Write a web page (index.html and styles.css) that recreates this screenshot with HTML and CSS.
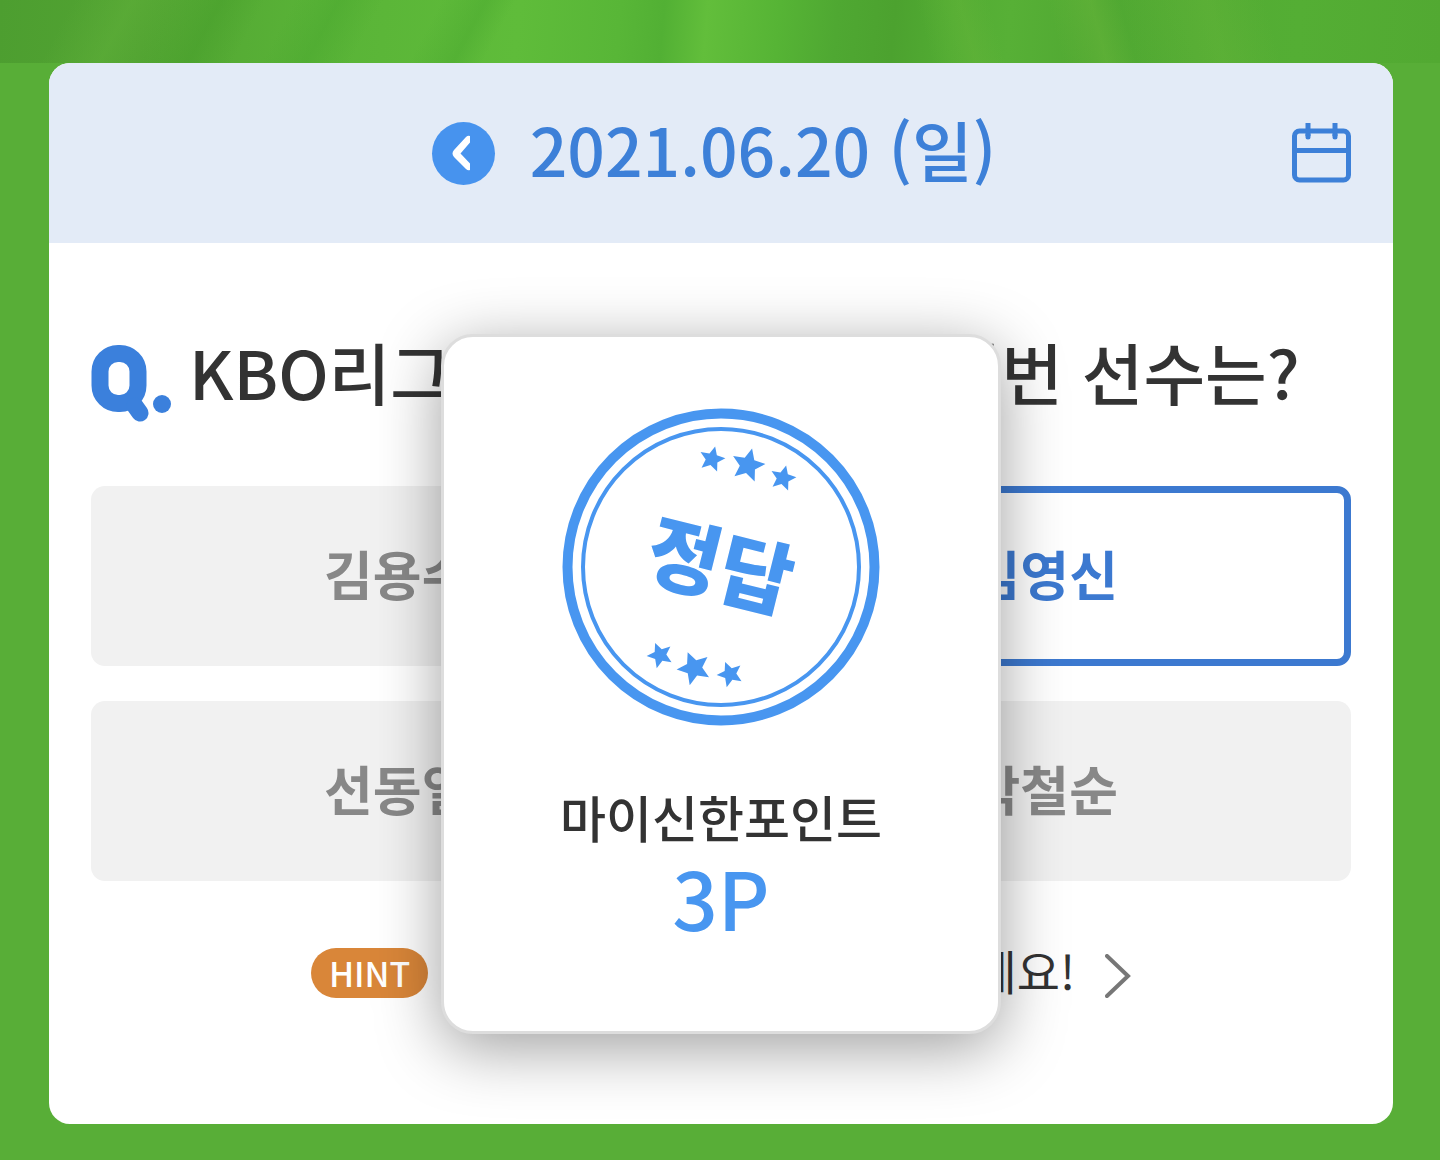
FILE: index.html
```html
<!DOCTYPE html>
<html lang="ko">
<head>
    <meta charset="UTF-8">
    <meta name="viewport" content="width=device-width, initial-scale=1.0">
    <title>야구 퀴즈</title>
    <link rel="stylesheet" href="styles.css">
</head>
<body>

    <main class="quiz-card">
        <header class="date-bar">
            <button class="prev-button" type="button" aria-label="이전 날짜">
                <svg viewBox="0 0 63 63" aria-hidden="true">
                    <path d="M38 14v6.500L28.500 31.500 38 41.500V48q-2 1-4-1L22 35q-3-3.500 0-7L34 15q2-2 4-1z" fill="#fff"/>
                </svg>
            </button>
            <h1 class="date">2021.06.20 (일)</h1>
            <button class="calendar-button" type="button" aria-label="달력">
                <svg viewBox="0 0 60 60" fill="none" stroke="#3d80d8" stroke-width="5" aria-hidden="true">
                    <rect x="3.500" y="8" width="54" height="49" rx="5"/>
                    <path d="M3 27.500h55M17 0v13M44 0v13"/>
                    <path d="M17 12v2M44 12v2" stroke-linecap="round"/>
                </svg>
            </button>
        </header>

        <section class="quiz-body">
            <h2 class="question">
                <svg class="q-mark" viewBox="0 0 82 78" role="img" aria-label="Q.">
                    <rect x="9" y="9.500" width="38" height="50" rx="18" fill="none" stroke="#3b80dc" stroke-width="17"/>
                    <path d="M44 62l5 7" stroke="#3b80dc" stroke-width="17" stroke-linecap="round"/>
                    <circle cx="71" cy="60" r="9" fill="#3b80dc"/>
                </svg>
                <span class="question-text">KBO리그 역대 최초의 영구결번 선수는?</span>
            </h2>

            <div class="options">
                <button class="option" type="button">김용수</button>
                <button class="option selected" type="button">김영신</button>
                <button class="option" type="button">선동열</button>
                <button class="option" type="button">박철순</button>
            </div>

            <a class="hint" href="#">
                <span class="hint-badge">HINT</span>
                <span class="hint-text">지금 바로 힌트를 확인해보세요!</span>
                <svg class="hint-arrow" viewBox="0 0 26 44" aria-hidden="true">
                    <path d="M2 2l21 20L2 42" fill="none" stroke="#777" stroke-width="4" stroke-linecap="round"/>
                </svg>
            </a>

            <!-- Result popup over the quiz -->
            <div class="overlay">
                <div class="popup" role="dialog" aria-label="정답">
                    <svg class="stamp" viewBox="0 0 318 318" fill="#4896f0">
                        <defs>
                            <path id="star" d="M0-13L3.800-4.800 12.800-4 6 2 8 11 0 6.300-8 11-6 2-12.800-4-3.800-4.800z"/>
                        </defs>
                        <circle cx="159" cy="159" r="153.500" fill="none" stroke="#4896f0" stroke-width="10"/>
                        <circle cx="159" cy="159" r="138" fill="none" stroke="#4896f0" stroke-width="4"/>
                        <use href="#star" transform="translate(150 51) rotate(14)"/>
                        <use href="#star" transform="translate(186 57) rotate(14) scale(1.300)"/>
                        <use href="#star" transform="translate(221 70) rotate(14)"/>
                        <text class="stamp-text" x="158" y="188" text-anchor="middle" transform="rotate(14 159 159)">정답</text>
                        <use href="#star" transform="translate(98 247) rotate(-22)"/>
                        <use href="#star" transform="translate(132 260) rotate(-22) scale(1.300)"/>
                        <use href="#star" transform="translate(168 266) rotate(-22)"/>
                    </svg>
                    <p class="point-label">마이신한포인트</p>
                    <p class="point-value">3P</p>
                </div>
            </div>
        </section>
    </main>

</body>
</html>
```
FILE: styles.css
```css
* {
    box-sizing: border-box;
}

body {
    margin: 0;
    padding: 63px 47px 36px 49px;
    font-family: "Noto Sans CJK KR", sans-serif;
    color: #333;
    /* grass strip on top, plain green below */
    background:
        linear-gradient(118deg, transparent 5%, rgba(100, 180, 60, 0.4) 9%, transparent 12%, rgba(66, 155, 40, 0.4) 15%, transparent 18%, transparent 20%, rgba(70, 165, 45, 0.4) 23%, transparent 26%, transparent 30%, rgba(70, 165, 45, 0.4) 33%, transparent 35%) top / 100% 63px no-repeat,
        linear-gradient(75deg, transparent 64%, rgba(110, 185, 60, 0.3) 67%, transparent 69%, transparent 73%, rgba(110, 185, 60, 0.4) 76%, transparent 78%, rgba(110, 185, 60, 0.3) 84%, transparent 88%) top / 100% 63px no-repeat,
        linear-gradient(95deg, #4d9e30 0%, #52a432 10%, #59b337 22%, #5fbc3a 36%, #58b637 43%, #52b034 46%, #62be3b 49%, #56b435 54%, #4fa832 58%, #4ca22f 62%, #52ac33 66%, #57b036 70%, #50a832 76%, #54ae34 90%, #52a932 100%) top / 100% 63px no-repeat,
        #58ae37;
}

button {
    padding: 0;
    border: none;
    background: none;
    font-family: inherit;
    cursor: pointer;
}

svg {
    display: block;
}

.quiz-card {
    border-radius: 21px;
    overflow: hidden;
    background-color: #fff;
}

/* Date header */
.date-bar {
    display: grid;
    grid-template-columns: 1fr auto auto 1fr;
    align-items: center;
    column-gap: 35px;
    height: 180px;
    padding: 0 42px;
    background-color: #e3ebf7;
}

.prev-button {
    grid-column: 2;
    width: 63px;
    height: 63px;
    border-radius: 50%;
    background-color: #4793ee;
}

.date {
    margin: 0;
    padding: 0 14px 10px 0;
    font-size: 66px;
    line-height: 100px;
    font-weight: 500;
    color: #3d80d8;
}

.calendar-button {
    justify-self: end;
    width: 60px;
    height: 60px;
}

/* Question and answers */
.quiz-body {
    position: relative;
    padding: 83px 42px 126px;
}

.question {
    display: flex;
    align-items: flex-end;
    gap: 16px;
    margin: 0 0 60px;
    font-size: 67px;
    line-height: 90px;
    font-weight: 500;
    white-space: nowrap;
}

.question-text {
    padding-bottom: 10px;
}

.q-mark {
    width: 82px;
    height: 78px;
    margin-bottom: 4px;
    flex: none;
}

.options {
    display: grid;
    grid-template-columns: 1fr 1fr;
    gap: 35px;
}

.option {
    height: 180px;
    padding-bottom: 6px;
    border-radius: 14px;
    background-color: #f1f1f1;
    font-size: 53px;
    font-weight: 700;
    color: #888;
}

.option.selected {
    border: 7px solid #3c79d0;
    background-color: #fff;
    color: #3c79d0;
}

.hint {
    display: flex;
    justify-content: center;
    align-items: center;
    gap: 30px;
    margin-top: 67px;
    font-size: 47px;
    line-height: 50px;
    color: #333;
    text-decoration: none;
    white-space: nowrap;
}

.hint-badge {
    padding: 0 18px;
    border-radius: 25px;
    background-color: #d98639;
    font-size: 34px;
    font-weight: 500;
    color: #fff;
}

.hint-text {
    line-height: 44px;
    padding-bottom: 6px;
}

.hint-arrow {
    width: 26px;
    height: 44px;
    margin-top: 6px;
}

/* Popup */
.overlay {
    position: absolute;
    inset: 0;
    display: flex;
    justify-content: center;
    align-items: center;
}

.popup {
    display: flex;
    flex-direction: column;
    align-items: center;
    width: 560px;
    max-width: 90%;
    padding: 71px 0 90px;
    border: 3px solid #ddd;
    border-radius: 32px;
    background-color: #fff;
    box-shadow: 0 14px 64px rgba(0, 0, 0, 0.38);
}

.stamp {
    width: 318px;
    height: 318px;
}

.stamp-text {
    font-size: 80px;
    font-weight: 900;
}

.point-label {
    margin: 55px 0 0;
    font-size: 50px;
    line-height: 70px;
    font-weight: 500;
}

.point-value {
    margin: 0;
    font-size: 80px;
    line-height: 90px;
    font-weight: 500;
    color: #4896f0;
}
```
